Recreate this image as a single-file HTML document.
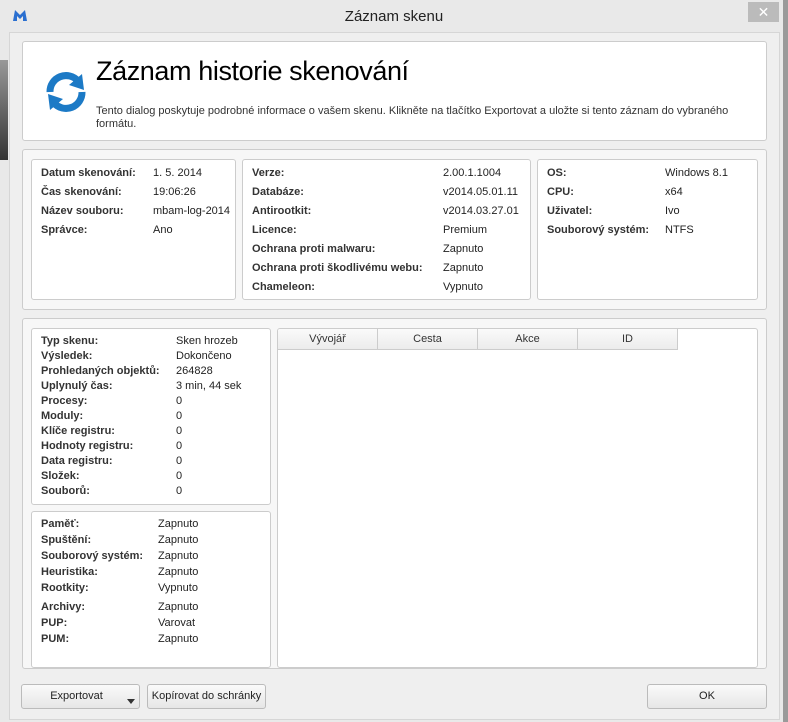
<!DOCTYPE html>
<html><head><meta charset="utf-8"><style>
*{box-sizing:border-box;margin:0;padding:0}
body{width:788px;height:722px;overflow:hidden;background:#e9e9e9;font-family:"Liberation Sans",sans-serif;font-size:11px;color:#222;position:relative}
.abs{position:absolute}
.edge{left:0;top:60px;width:8px;height:100px;background:linear-gradient(#999,#333)}
.redge{right:0;top:0;width:5px;height:722px;background:#9a9a9a}
.title{left:0;top:0;width:100%;height:32px;text-align:center;line-height:33px;font-family:"Liberation Sans",sans-serif;font-size:15px;color:#222}
.close{left:748px;top:2px;width:31px;height:20px;background:#bbb;color:#fff;text-align:center;line-height:20px;font-size:14px}
.client{left:9px;top:32px;width:771px;height:688px;background:#efefef;border:1px solid #d6d6d6}
.box{background:#fff;border:1px solid #ccc;border-radius:3px}
.grp{background:#f7f7f7;border:1px solid #ccc;border-radius:3px}
.hdr{font-family:"Liberation Sans",sans-serif;font-size:27px;letter-spacing:-0.4px;color:#000}
.row{position:absolute;white-space:nowrap}
b{font-weight:bold;color:#333}
.th{top:0;height:21px;border-right:1px solid #ccc;background:linear-gradient(#fafafa,#ececec);text-align:center;line-height:20px;border-bottom:1px solid #ccc;color:#333}
.btn{border:1px solid #bbb;border-radius:3px;background:linear-gradient(#fafafa,#e6e6e6);text-align:center;line-height:23px;color:#222}
</style></head><body>
<div class="abs edge"></div>
<div class="abs redge"></div>
<div class="abs title">Záznam skenu</div>
<svg class="abs" style="left:12px;top:8px" width="16" height="14" viewBox="0 0 16 14"><path d="M1 13 L3 2 L8 7 L13 2 L15 13 L11 13 L11 8 L8 11 L5 8 L5 13Z" fill="#2a6fd0"/></svg>
<div class="abs close">✕</div>
<div class="abs client"></div>

<div class="abs box" style="left:22px;top:41px;width:745px;height:100px"></div>
<svg class="abs" style="left:44px;top:70px" width="44" height="44" viewBox="0 0 44 44">
<path d="M6 22 A16 16 0 0 1 34 11" fill="none" stroke="#1c7ac6" stroke-width="7"/>
<path d="M38 4 L40 20 L25 15Z" fill="#1c7ac6"/>
<path d="M38 22 A16 16 0 0 1 10 33" fill="none" stroke="#1c7ac6" stroke-width="7"/>
<path d="M6 40 L4 24 L19 29Z" fill="#1c7ac6"/>
</svg>
<div class="abs hdr" style="left:96px;top:56px">Záznam historie skenování</div>
<div class="abs" style="left:96px;top:105px;width:640px;line-height:13px;color:#333">Tento dialog poskytuje podrobné informace o vašem skenu. Klikněte na tlačítko Exportovat a uložte si tento záznam do vybraného formátu.</div>

<div class="abs grp" style="left:22px;top:149px;width:745px;height:161px"></div>
<div class="abs box" style="left:31px;top:159px;width:205px;height:141px"></div>
<div class="abs box" style="left:242px;top:159px;width:289px;height:141px"></div>
<div class="abs box" style="left:537px;top:159px;width:221px;height:141px"></div>

<div class="row" style="left:41px;top:167px"><b>Datum skenování:</b></div><div class="row" style="left:153px;top:167px">1. 5. 2014</div>
<div class="row" style="left:41px;top:186px"><b>Čas skenování:</b></div><div class="row" style="left:153px;top:186px">19:06:26</div>
<div class="row" style="left:41px;top:205px"><b>Název souboru:</b></div><div class="row" style="left:153px;top:205px">mbam-log-2014</div>
<div class="row" style="left:41px;top:224px"><b>Správce:</b></div><div class="row" style="left:153px;top:224px">Ano</div>

<div class="row" style="left:252px;top:167px"><b>Verze:</b></div><div class="row" style="left:443px;top:167px">2.00.1.1004</div>
<div class="row" style="left:252px;top:186px"><b>Databáze:</b></div><div class="row" style="left:443px;top:186px">v2014.05.01.11</div>
<div class="row" style="left:252px;top:205px"><b>Antirootkit:</b></div><div class="row" style="left:443px;top:205px">v2014.03.27.01</div>
<div class="row" style="left:252px;top:224px"><b>Licence:</b></div><div class="row" style="left:443px;top:224px">Premium</div>
<div class="row" style="left:252px;top:243px"><b>Ochrana proti malwaru:</b></div><div class="row" style="left:443px;top:243px">Zapnuto</div>
<div class="row" style="left:252px;top:262px"><b>Ochrana proti škodlivému webu:</b></div><div class="row" style="left:443px;top:262px">Zapnuto</div>
<div class="row" style="left:252px;top:281px"><b>Chameleon:</b></div><div class="row" style="left:443px;top:281px">Vypnuto</div>

<div class="row" style="left:547px;top:167px"><b>OS:</b></div><div class="row" style="left:665px;top:167px">Windows 8.1</div>
<div class="row" style="left:547px;top:186px"><b>CPU:</b></div><div class="row" style="left:665px;top:186px">x64</div>
<div class="row" style="left:547px;top:205px"><b>Uživatel:</b></div><div class="row" style="left:665px;top:205px">Ivo</div>
<div class="row" style="left:547px;top:224px"><b>Souborový systém:</b></div><div class="row" style="left:665px;top:224px">NTFS</div>

<div class="abs grp" style="left:22px;top:318px;width:745px;height:351px"></div>
<div class="abs box" style="left:31px;top:328px;width:240px;height:177px"></div>
<div class="abs box" style="left:31px;top:511px;width:240px;height:157px"></div>
<div class="abs box" style="left:277px;top:328px;width:481px;height:340px;overflow:hidden">
<div class="abs th" style="left:0;width:100px">Vývojář</div>
<div class="abs th" style="left:100px;width:100px">Cesta</div>
<div class="abs th" style="left:200px;width:100px">Akce</div>
<div class="abs th" style="left:300px;width:100px">ID</div>
</div>

<div class="row" style="left:41px;top:335px"><b>Typ skenu:</b></div><div class="row" style="left:176px;top:335px">Sken hrozeb</div>
<div class="row" style="left:41px;top:350px"><b>Výsledek:</b></div><div class="row" style="left:176px;top:350px">Dokončeno</div>
<div class="row" style="left:41px;top:365px"><b>Prohledaných objektů:</b></div><div class="row" style="left:176px;top:365px">264828</div>
<div class="row" style="left:41px;top:380px"><b>Uplynulý čas:</b></div><div class="row" style="left:176px;top:380px">3 min, 44 sek</div>
<div class="row" style="left:41px;top:395px"><b>Procesy:</b></div><div class="row" style="left:176px;top:395px">0</div>
<div class="row" style="left:41px;top:410px"><b>Moduly:</b></div><div class="row" style="left:176px;top:410px">0</div>
<div class="row" style="left:41px;top:425px"><b>Klíče registru:</b></div><div class="row" style="left:176px;top:425px">0</div>
<div class="row" style="left:41px;top:440px"><b>Hodnoty registru:</b></div><div class="row" style="left:176px;top:440px">0</div>
<div class="row" style="left:41px;top:455px"><b>Data registru:</b></div><div class="row" style="left:176px;top:455px">0</div>
<div class="row" style="left:41px;top:470px"><b>Složek:</b></div><div class="row" style="left:176px;top:470px">0</div>
<div class="row" style="left:41px;top:485px"><b>Souborů:</b></div><div class="row" style="left:176px;top:485px">0</div>

<div class="row" style="left:41px;top:518px"><b>Paměť:</b></div><div class="row" style="left:158px;top:518px">Zapnuto</div>
<div class="row" style="left:41px;top:534px"><b>Spuštění:</b></div><div class="row" style="left:158px;top:534px">Zapnuto</div>
<div class="row" style="left:41px;top:550px"><b>Souborový systém:</b></div><div class="row" style="left:158px;top:550px">Zapnuto</div>
<div class="row" style="left:41px;top:566px"><b>Heuristika:</b></div><div class="row" style="left:158px;top:566px">Zapnuto</div>
<div class="row" style="left:41px;top:582px"><b>Rootkity:</b></div><div class="row" style="left:158px;top:582px">Vypnuto</div>
<div class="row" style="left:41px;top:601px"><b>Archivy:</b></div><div class="row" style="left:158px;top:601px">Zapnuto</div>
<div class="row" style="left:41px;top:617px"><b>PUP:</b></div><div class="row" style="left:158px;top:617px">Varovat</div>
<div class="row" style="left:41px;top:633px"><b>PUM:</b></div><div class="row" style="left:158px;top:633px">Zapnuto</div>

<div class="abs btn" style="left:21px;top:684px;width:119px;height:25px;padding-right:8px">Exportovat</div>
<div class="abs" style="left:127px;top:699px;width:0;height:0;border-left:4px solid transparent;border-right:4px solid transparent;border-top:5px solid #333"></div>
<div class="abs btn" style="left:147px;top:684px;width:119px;height:25px">Kopírovat do schránky</div>
<div class="abs btn" style="left:647px;top:684px;width:120px;height:25px">OK</div>
</body></html>
